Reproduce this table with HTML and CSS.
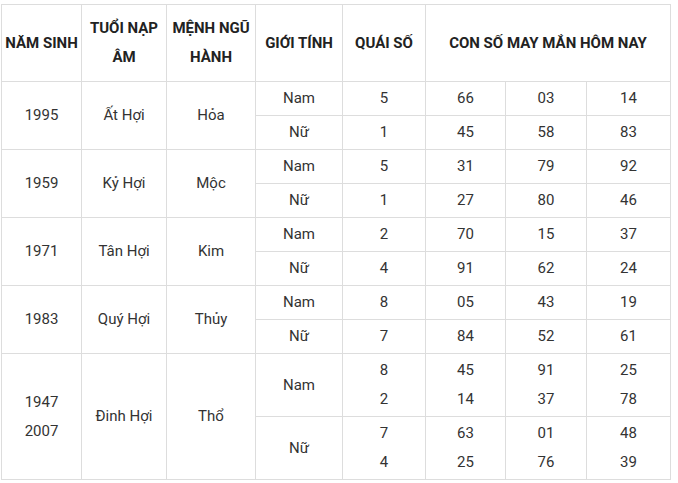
FILE: index.html
```html
<!DOCTYPE html>
<html lang="vi">
<head>
<meta charset="utf-8">
<link rel="stylesheet" href="styles.css">
</head>
<body>
<table class="lucky">
<colgroup>
<col class="c1"><col class="c2"><col class="c3"><col class="c4"><col class="c5"><col class="c6"><col class="c7"><col class="c8">
</colgroup>
<thead>
<tr class="head">
<th>NĂM SINH</th><th>TUỔI NẠP ÂM</th><th>MỆNH NGŨ HÀNH</th><th>GIỚI TÍNH</th><th>QUÁI SỐ</th><th colspan="3">CON SỐ MAY MẮN HÔM NAY</th>
</tr>
</thead>
<tbody>
<tr><td rowspan="2">1995</td><td rowspan="2">Ất Hợi</td><td rowspan="2">Hỏa</td><td>Nam</td><td>5</td><td>66</td><td>03</td><td>14</td></tr>
<tr><td>Nữ</td><td>1</td><td>45</td><td>58</td><td>83</td></tr>
<tr><td rowspan="2">1959</td><td rowspan="2">Kỷ Hợi</td><td rowspan="2">Mộc</td><td>Nam</td><td>5</td><td>31</td><td>79</td><td>92</td></tr>
<tr><td>Nữ</td><td>1</td><td>27</td><td>80</td><td>46</td></tr>
<tr><td rowspan="2">1971</td><td rowspan="2">Tân Hợi</td><td rowspan="2">Kim</td><td>Nam</td><td>2</td><td>70</td><td>15</td><td>37</td></tr>
<tr><td>Nữ</td><td>4</td><td>91</td><td>62</td><td>24</td></tr>
<tr><td rowspan="2">1983</td><td rowspan="2">Quý Hợi</td><td rowspan="2">Thủy</td><td>Nam</td><td>8</td><td>05</td><td>43</td><td>19</td></tr>
<tr><td>Nữ</td><td>7</td><td>84</td><td>52</td><td>61</td></tr>
<tr class="tall"><td rowspan="2">1947<br>2007</td><td rowspan="2">Đinh Hợi</td><td rowspan="2">Thổ</td><td>Nam</td><td>8<br>2</td><td>45<br>14</td><td>91<br>37</td><td>25<br>78</td></tr>
<tr class="tall"><td>Nữ</td><td>7<br>4</td><td>63<br>25</td><td>01<br>76</td><td>48<br>39</td></tr>
</tbody>
</table>
</body>
</html>
```
FILE: styles.css
```css
html, body {
  background: #ffffff;
}
body {
  margin: 4px 0 0 1px;
  font-family: Roboto, "Liberation Sans", Arial, sans-serif;
  font-size: 15px;
  color: #333333;
}
.lucky {
  border-collapse: collapse;
  table-layout: fixed;
  width: 669px;
}
.c1 { width: 80px; }
.c2 { width: 85px; }
.c3 { width: 89px; }
.c4 { width: 87px; }
.c5 { width: 83px; }
.c6 { width: 80px; }
.c7 { width: 81px; }
.c8 { width: 84px; }
.lucky th,
.lucky td {
  border: 1px solid #dddddd;
  text-align: center;
  vertical-align: middle;
  line-height: 29px;
  padding: 2px 4px;
}
.lucky th {
  font-weight: bold;
  color: #222222;
}
.head th {
  height: 76px;
  padding: 0 1px;
}
.lucky tbody td {
  height: 29px;
}
.lucky tbody .tall td {
  height: 58px;
}
```
